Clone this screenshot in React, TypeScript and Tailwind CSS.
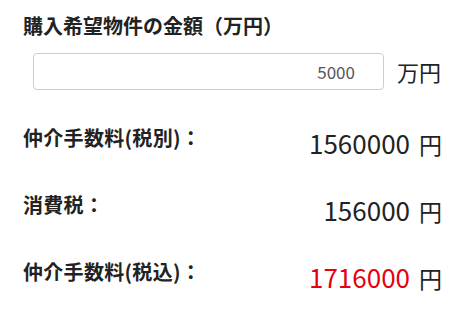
import React from "react";

const font = { fontFamily: '"Noto Sans CJK JP", "Noto Sans", sans-serif' };

function Row({ label, value, red }: { label: string; value: string; red?: boolean }) {
  return (
    <div className="flex items-center justify-between h-[67px]">
      <span className="text-[20px] font-bold text-[#222] leading-[28px] whitespace-nowrap tracking-[0.3px]">{label}</span>
      <span className="mt-[11px] -mr-[2px] flex items-baseline whitespace-nowrap leading-[32px] text-[#222]">
        <span className={red ? "text-[26px] text-[#e60012]" : "text-[26px]"}>{value}</span>
        <span className="text-[23px] ml-[9px]">円</span>
      </span>
    </div>
  );
}

export default function App() {
  return (
    <div className="w-[466px] h-[309px] overflow-hidden bg-white pl-[23px] pr-[26px] pt-[12px]" style={font}>
      <div className="text-[20px] font-bold text-[#222] leading-[28px] whitespace-nowrap">購入希望物件の金額（万円）</div>
      <div className="flex items-center mt-[13px] ml-[10px]">
        <div className="shrink-0 w-[351px] h-[37px] border border-[#ccc] rounded-[4px] flex items-center justify-end pr-[28px] text-[17px] text-[#555]">
          5000
        </div>
        <span className="shrink-0 ml-[13px] text-[22px] text-[#222] whitespace-nowrap">万円</span>
      </div>
      <div className="mt-[14px]">
        <Row label="仲介手数料(税別)：" value="1560000" />
        <Row label="消費税：" value="156000" />
        <Row label="仲介手数料(税込)：" value="1716000" red />
      </div>
    </div>
  );
}
